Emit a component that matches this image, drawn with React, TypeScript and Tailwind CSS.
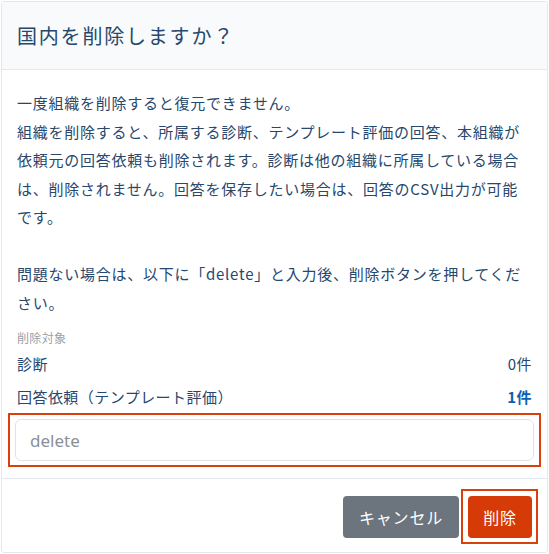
import React from "react";

const font = { fontFamily: '"Noto Sans CJK JP", "Noto Sans", sans-serif' };

export default function App() {
  return (
    <div className="w-[549px] h-[554px] bg-white p-px" style={font}>
      <div className="h-full flex flex-col border border-[#e3e8ee] rounded-[3px] bg-white text-[#27476c]">
        {/* Header */}
        <div className="h-[68px] shrink-0 flex items-center px-[15px] bg-[#f8fafc] border-b border-[#e3e8ee]">
          <h2 className="text-[20px] tracking-[0.09em] leading-none">国内を削除しますか？</h2>
        </div>

        {/* Body */}
        <div className="flex-1 px-[15px] pt-[19px] pb-[10px]">
          <p className="text-[15px] leading-[28.5px] tracking-[0.05em] whitespace-nowrap">
            一度組織を削除すると復元できません。
            <br />
            組織を削除すると、所属する診断、テンプレート評価の回答、本組織が
            <br />
            依頼元の回答依頼も削除されます。診断は他の組織に所属している場合
            <br />
            は、削除されません。回答を保存したい場合は、回答のCSV出力が可能
            <br />
            です。
            <br />
            <br />
            問題ない場合は、以下に「delete」と入力後、削除ボタンを押してくだ
            <br />
            さい。
          </p>

          <div className="mt-[12px] mb-[2px] h-[18px] leading-[18px] text-[12px] text-[#9aa1a9] tracking-[0.03em]">
            削除対象
          </div>
          <div className="flex flex-col gap-[3px]">
            <div className="h-[30px] flex items-center justify-between text-[15px] tracking-[0.03em]">
              <span>診断</span>
              <span>0件</span>
            </div>
            <div className="h-[30px] flex items-center justify-between text-[15px] tracking-[0.03em]">
              <span>回答依頼（テンプレート評価）</span>
              <span className="font-bold text-[#0d5fb3]">1件</span>
            </div>
          </div>

          <div className="mt-px -mx-[9px] border-2 border-[#d9400c] px-[5px] py-[4px]">
            <input
              type="text"
              placeholder="delete"
              className="w-full h-[42px] rounded-[6px] border border-[#dfe3e8] px-[14px] text-[17px] text-[#27476c] placeholder:text-[#8a9099] outline-none"
              style={{ fontFamily: '"Noto Sans", sans-serif' }}
            />
          </div>
        </div>

        {/* Footer */}
        <div className="h-[74px] shrink-0 border-t border-[#e3e8ee] flex items-start justify-end gap-[2px] pt-[10px] pr-[9px]">
          <button className="mt-[7px] w-[116px] h-[42px] rounded-[4px] bg-[#6c757d] text-white text-[16px] tracking-[0.05em]">
            キャンセル
          </button>
          <div className="border-2 border-[#d9400c] pl-[5px] pt-[5px] pr-[4px] pb-[4px]">
            <button className="w-[64px] h-[42px] rounded-[4px] bg-[#d63a06] text-white text-[16px] tracking-[0.05em]">
              削除
            </button>
          </div>
        </div>
      </div>
    </div>
  );
}
